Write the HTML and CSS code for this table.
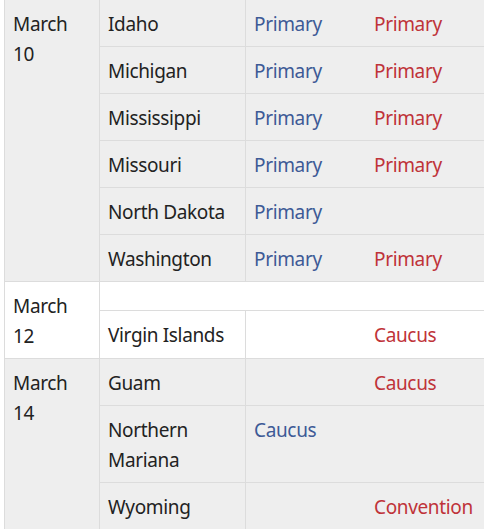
FILE: index.html
```html
<!DOCTYPE html>
<html lang="en">
<head>
<meta charset="utf-8">
<title>March contests</title>
<link rel="stylesheet" href="styles.css">
</head>
<body>
<div class="wrap">
<table class="contests">
  <colgroup>
    <col class="c-date">
    <col class="c-state">
    <col class="c-dem">
    <col class="c-rep">
  </colgroup>
  <tbody class="grp gray">
    <tr><td class="date" rowspan="6">March 10</td><td class="state">Idaho</td><td class="dem">Primary</td><td class="rep">Primary</td></tr>
    <tr><td class="state">Michigan</td><td class="dem">Primary</td><td class="rep">Primary</td></tr>
    <tr><td class="state">Mississippi</td><td class="dem">Primary</td><td class="rep">Primary</td></tr>
    <tr><td class="state">Missouri</td><td class="dem">Primary</td><td class="rep">Primary</td></tr>
    <tr><td class="state">North Dakota</td><td class="dem">Primary</td><td class="rep"></td></tr>
    <tr><td class="state">Washington</td><td class="dem">Primary</td><td class="rep">Primary</td></tr>
  </tbody>
  <tbody class="grp white">
    <tr class="blank-row"><td class="date" rowspan="2">March 12</td><td class="blank" colspan="3"></td></tr>
    <tr><td class="state">Virgin Islands</td><td class="dem"></td><td class="rep">Caucus</td></tr>
  </tbody>
  <tbody class="grp gray">
    <tr><td class="date" rowspan="3">March 14</td><td class="state">Guam</td><td class="dem"></td><td class="rep">Caucus</td></tr>
    <tr><td class="state">Northern Mariana</td><td class="dem">Caucus</td><td class="rep"></td></tr>
    <tr><td class="state">Wyoming</td><td class="dem"></td><td class="rep">Convention</td></tr>
  </tbody>
</table>
</div>
</body>
</html>
```
FILE: styles.css
```css
html, body {
  margin: 0;
  padding: 0;
  overflow: hidden;
  background: #ffffff;
}

.wrap {
  margin: -1px 0 0 4px;
  width: 520px;
}

.contests {
  border-collapse: separate;
  border-spacing: 0;
  table-layout: fixed;
  width: 520px;
  border-left: 1px solid #dcdcdc;
  font-family: "Noto Sans", "Open Sans", sans-serif;
  font-size: 19px;
  letter-spacing: -0.35px;
  line-height: 30px;
  color: #222222;
}

.c-date { width: 95px; }
.c-state { width: 146px; }
.c-dem { width: 120px; }
.c-rep { width: 159px; }

.contests td {
  padding: 9px 8px 7px;
  vertical-align: top;
  border-top: 1px solid #dcdcdc;
  text-align: left;
}

.gray td { background: #eeeeee; }
.white td { background: #ffffff; }

.contests td.date,
.contests td.state {
  border-right: 1px solid #dcdcdc;
}

.contests td.blank {
  padding: 0;
  height: 28px;
}

.dem { color: #3d5a96; }
.rep { color: #bf3339; }
```
